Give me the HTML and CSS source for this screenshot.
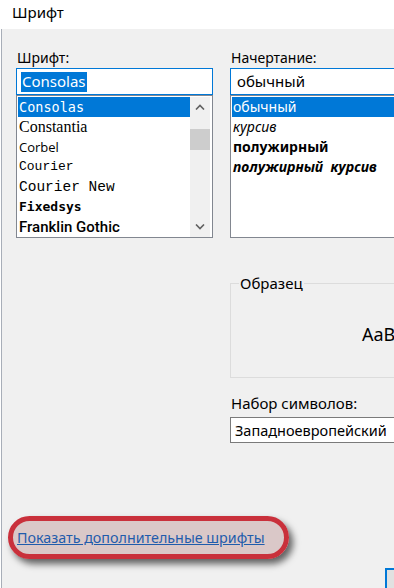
FILE: index.html
```html
<!DOCTYPE html>
<html lang="ru">
<head>
  <meta charset="UTF-8">
  <meta name="viewport" content="width=device-width, initial-scale=1.0">
  <title>Шрифт</title>
  <link rel="stylesheet" href="styles.css">
</head>
<body>
  <div class="window">
    <div class="titlebar">Шрифт</div>

    <div class="dialog">
      <div class="top">
        <div class="col col-font">
          <div class="label">Шрифт:</div>
          <div class="input focus"><span class="selected-text">Consolas</span></div>
          <div class="list">
            <ul class="rows">
              <li class="row active f-consolas">Consolas</li>
              <li class="row f-constantia">Constantia</li>
              <li class="row f-corbel">Corbel</li>
              <li class="row f-courier">Courier</li>
              <li class="row f-courier-new">Courier New</li>
              <li class="row f-fixedsys">Fixedsys</li>
              <li class="row f-franklin">Franklin Gothic</li>
            </ul>
            <div class="scrollbar">
              <div class="arrow">
                <svg width="10" height="6" viewBox="0 0 10 6"><path d="M1 5.5 L5 1.5 L9 5.5" fill="none" stroke="#606060" stroke-width="1.6"/></svg>
              </div>
              <div class="thumb"></div>
              <div class="arrow arrow-down">
                <svg width="10" height="6" viewBox="0 0 10 6"><path d="M1 0.5 L5 4.5 L9 0.5" fill="none" stroke="#606060" stroke-width="1.6"/></svg>
              </div>
            </div>
          </div>
        </div>

        <div class="col col-style">
          <div class="label">Начертание:</div>
          <div class="input focus input-style">обычный</div>
          <div class="list">
            <ul class="rows rows-style">
              <li class="row active">обычный</li>
              <li class="row s-italic">курсив</li>
              <li class="row s-bold">полужирный</li>
              <li class="row s-bold s-italic">полужирный&nbsp; курсив</li>
            </ul>
          </div>

          <fieldset class="sample-box">
            <legend>Образец</legend>
            <div class="sample">AaBbYyZz</div>
          </fieldset>

          <div class="label label-charset">Набор символов:</div>
          <div class="select">Западноевропейский</div>
        </div>
      </div>

      <div class="footer">
        <div class="more-link">
          <a href="#">Показать дополнительные шрифты</a>
          <span class="mark"></span>
        </div>
        <div class="buttons">
          <div class="button"></div>
        </div>
      </div>
    </div>
  </div>
</body>
</html>
```

FILE: styles.css
```css
body {
  margin: 0;
  background: #ffffff;
  font-family: "Segoe UI", "Noto Sans", sans-serif;
  font-size: 14px;
  color: #000;
}

.window {
  width: 394px;
  height: 588px;
  overflow: hidden;
  display: flex;
  flex-direction: column;
}

.titlebar {
  height: 29px;
  line-height: 25px;
  padding-left: 12px;
  font-size: 15px;
  background: #fff;
  flex: none;
}

.dialog {
  flex: 1;
  margin-left: 1px;
  border-left: 1px solid #a8aeb8;
  background: #f0f0f0;
  padding: 20px 0 0 14px;
  display: flex;
  flex-direction: column;
}

.top {
  display: flex;
  gap: 17px;
}

.col {
  flex: none;
}

.col-font {
  width: 197px;
}

.col-style {
  width: 220px;
}

.label {
  height: 18px;
  line-height: 18px;
  margin-bottom: 1px;
  padding-left: 1px;
}

.input {
  box-sizing: border-box;
  height: 27px;
  background: #fff;
  border: 1px solid #0078d7;
  padding: 3px 4px;
  line-height: 19px;
  font-size: 15px;
  white-space: nowrap;
}

.input-style {
  padding-left: 6px;
}

.selected-text {
  display: inline-block;
  background: #0078d7;
  color: #fff;
  padding: 0 1px;
  height: 20px;
}

.list {
  display: flex;
  background: #fff;
  border: 1px solid #828790;
  padding: 1px 1px 0;
  height: 140px;
}

.rows {
  list-style: none;
  margin: 0;
  padding: 0;
  flex: 1;
  min-width: 0;
}

.row {
  height: 20px;
  line-height: 20px;
  padding-left: 1px;
  white-space: nowrap;
  overflow: hidden;
}

.row.active {
  background: #0078d7;
  color: #fff;
}

.f-consolas {
  font-family: "DejaVu Sans Mono", monospace;
  font-size: 13.5px;
}

.f-constantia {
  font-family: "Liberation Serif", serif;
  font-size: 16px;
}

.f-corbel {
  font-family: "Open Sans", sans-serif;
  font-size: 13px;
}

.f-courier {
  font-family: "Liberation Mono", monospace;
  font-size: 13px;
}

.f-courier-new {
  font-family: "Liberation Mono", monospace;
  font-size: 14.5px;
}

.f-fixedsys {
  font-family: "DejaVu Sans Mono", monospace;
  font-size: 13px;
  font-weight: bold;
}

.f-franklin {
  font-family: "Roboto", sans-serif;
  font-size: 15px;
  font-weight: 500;
}

.rows-style .row {
  font-size: 14px;
}

.s-italic {
  font-style: italic;
}

.s-bold {
  font-weight: bold;
}

.scrollbar {
  width: 20px;
  margin-right: 1px;
  background: #f0f0f0;
  display: flex;
  flex-direction: column;
  flex: none;
}

.arrow {
  height: 20px;
  display: flex;
  align-items: center;
  justify-content: center;
}

.arrow-down {
  margin-top: auto;
  height: 19px;
  align-items: flex-start;
  padding-top: 6px;
  box-sizing: border-box;
}

.thumb {
  margin-top: 12px;
  height: 21px;
  background: #cdcdcd;
}

.sample-box {
  box-sizing: border-box;
  margin: 36px 0 0;
  padding: 0 0 0 8px;
  height: 104px;
  border: 1px solid #dcdcdc;
  min-width: 0;
}

.sample-box legend {
  padding: 0 1px;
  line-height: 18px;
  font-size: 15px;
}

.sample {
  padding: 30px 0 0 123px;
  font-size: 18px;
  line-height: 24px;
  white-space: nowrap;
}

.label-charset {
  margin-top: 16px;
  margin-bottom: 5px;
  font-size: 15px;
}

.select {
  box-sizing: border-box;
  height: 26px;
  background: #fff;
  border: 1px solid #7a7a7a;
  padding-left: 4px;
  line-height: 24px;
  font-size: 14.5px;
  white-space: nowrap;
}

.footer {
  margin-top: 85px;
}

.more-link {
  position: relative;
  display: inline-block;
  margin-left: 1px;
  line-height: 20px;
}

.more-link a {
  color: #0066cc;
  font-size: 14.3px;
}

.mark {
  position: absolute;
  left: -9px;
  top: -12px;
  width: 281px;
  height: 43px;
  box-sizing: border-box;
  border: 5px solid #c9303b;
  border-radius: 22px;
  background: rgba(140, 60, 60, 0.22);
  box-shadow: 4px 5px 7px rgba(0, 0, 0, 0.6);
}

.buttons {
  display: flex;
  margin-top: 20px;
  padding-left: 369px;
}

.button {
  flex: none;
  width: 80px;
  height: 30px;
  box-sizing: border-box;
  border: 2px solid #0078d7;
  background: #e1e1e1;
}
```
